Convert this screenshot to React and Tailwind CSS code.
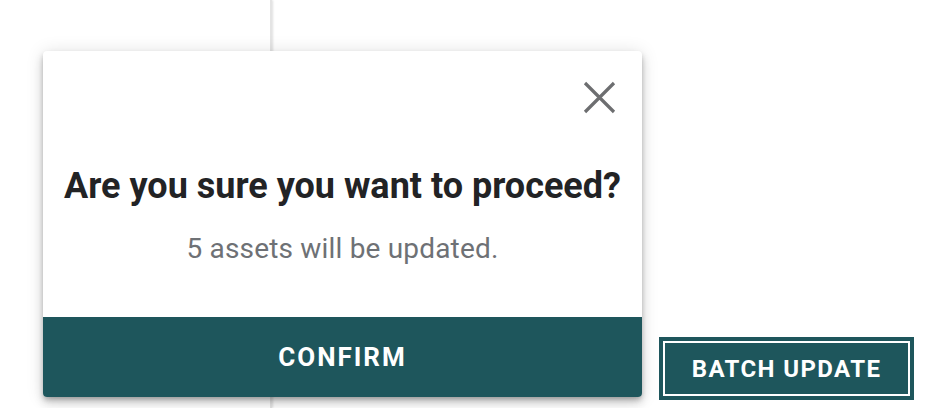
export default function App() {
  return (
    <div
      className="relative h-[408px] w-[928px] overflow-hidden bg-white"
      style={{ fontFamily: "Roboto, 'Liberation Sans', sans-serif" }}
    >
      <div className="flex h-full">
        <div className="h-full w-[272px] border-r-2 border-[#e4e4e4] shadow-[1px_0_2px_rgba(0,0,0,0.12)]" />
        <div className="flex flex-1 items-end justify-end pb-[8px] pr-[14px]">
          <button className="h-[63px] w-[255px] bg-[#1e565c] p-[4px]">
            <span className="flex h-full w-full items-center justify-center border-2 border-white text-[24px] font-bold tracking-[1.4px] text-white">
              BATCH UPDATE
            </span>
          </button>
        </div>
      </div>

      <div className="absolute left-[43px] top-[51px] flex h-[346px] w-[599px] flex-col overflow-hidden rounded-[4px] bg-white shadow-[0_3px_5px_-1px_rgba(0,0,0,0.25),0_6px_10px_0_rgba(0,0,0,0.16),0_1px_18px_0_rgba(0,0,0,0.12)]">
        <div className="flex justify-end pr-[25px] pt-[28px]">
          <svg width="36" height="36" viewBox="0 0 36 36" fill="none">
            <path d="M4 4L33 33M33 4L4 33" stroke="#6d6e70" strokeWidth="3.2" strokeLinecap="butt" />
          </svg>
        </div>
        <div className="flex flex-1 flex-col items-center">
          <h2 className="mt-[49px] text-[36px] font-bold leading-[44px] text-[#222325]">
            Are you sure you want to proceed?
          </h2>
          <p className="mt-[24px] text-[28px] leading-[34px] tracking-[0.18px] text-[#6e7175]">
            5 assets will be updated.
          </p>
        </div>
        <button className="flex h-[80px] items-center justify-center bg-[#1e565c] text-[26px] font-bold tracking-[2px] text-white">
          CONFIRM
        </button>
      </div>
    </div>
  );
}
